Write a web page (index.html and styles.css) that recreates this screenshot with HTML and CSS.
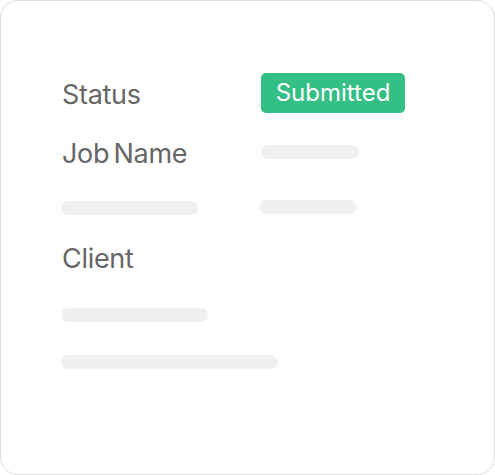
FILE: index.html
```html
<!DOCTYPE html>
<html>
<head>
<meta charset="utf-8">
<link rel="stylesheet" href="styles.css">
</head>
<body>
<div class="card">
  <div class="row row-status">
    <div class="col-left"><span class="label">Status</span></div>
    <div class="col-right"><span class="badge">Submitted</span></div>
  </div>
  <div class="row row-job">
    <div class="col-left"><span class="label">Job Name</span></div>
    <div class="col-right"><div class="bar bar-98 bar-job"></div></div>
  </div>
  <div class="row row-bars">
    <div class="col-left"><div class="bar bar-137 bar-down"></div></div>
    <div class="col-right"><div class="bar bar-98 bar-shift"></div></div>
  </div>
  <div class="row row-client">
    <div class="col-left"><span class="label">Client</span></div>
  </div>
  <div class="bar bar-147 bar-c1"></div>
  <div class="bar bar-217 bar-c2"></div>
</div>
</body>
</html>
```
FILE: styles.css
```css
* { box-sizing: border-box; }
html, body { margin: 0; padding: 0; background: #ffffff; }
body { font-family: Inter, "Noto Sans", sans-serif; }
.card {
  width: 495px;
  height: 475px;
  border: 1px solid #dcdcdc;
  border-radius: 18px;
  background: #ffffff;
  padding: 72px 0 0 60px;
}
.row { display: flex; align-items: flex-start; }
.col-left { width: 200px; flex: none; }
.col-right { flex: none; }
.label {
  display: block;
  font-size: 27px;
  line-height: 32px;
  color: #666666;
  letter-spacing: -0.3px;
  word-spacing: -3px;
  padding-left: 1px;
}
.row-status .label { margin-top: 6px; }
.badge {
  display: inline-block;
  width: 144px;
  height: 40px;
  border-radius: 5px;
  background: #34bf84;
  color: #ffffff;
  font-size: 24px;
  line-height: 40px;
  text-align: center;
}
.row-job { margin-top: 25px; height: 32px; }
.row-bars { margin-top: 30px; height: 15px; }
.row-client { margin-top: 28px; height: 32px; }
.bar { height: 14px; border-radius: 7px; background: #f0f0f0; }
.bar-98 { width: 98px; }
.bar-137 { width: 137px; }
.bar-147 { width: 147px; }
.bar-217 { width: 217px; }
.bar-job { margin-top: 7px; }
.bar-down { margin-top: 1px; }
.bar-shift { margin-left: -2px; }
.bar-c1 { margin-top: 33px; }
.bar-c2 { margin-top: 33px; }
```
